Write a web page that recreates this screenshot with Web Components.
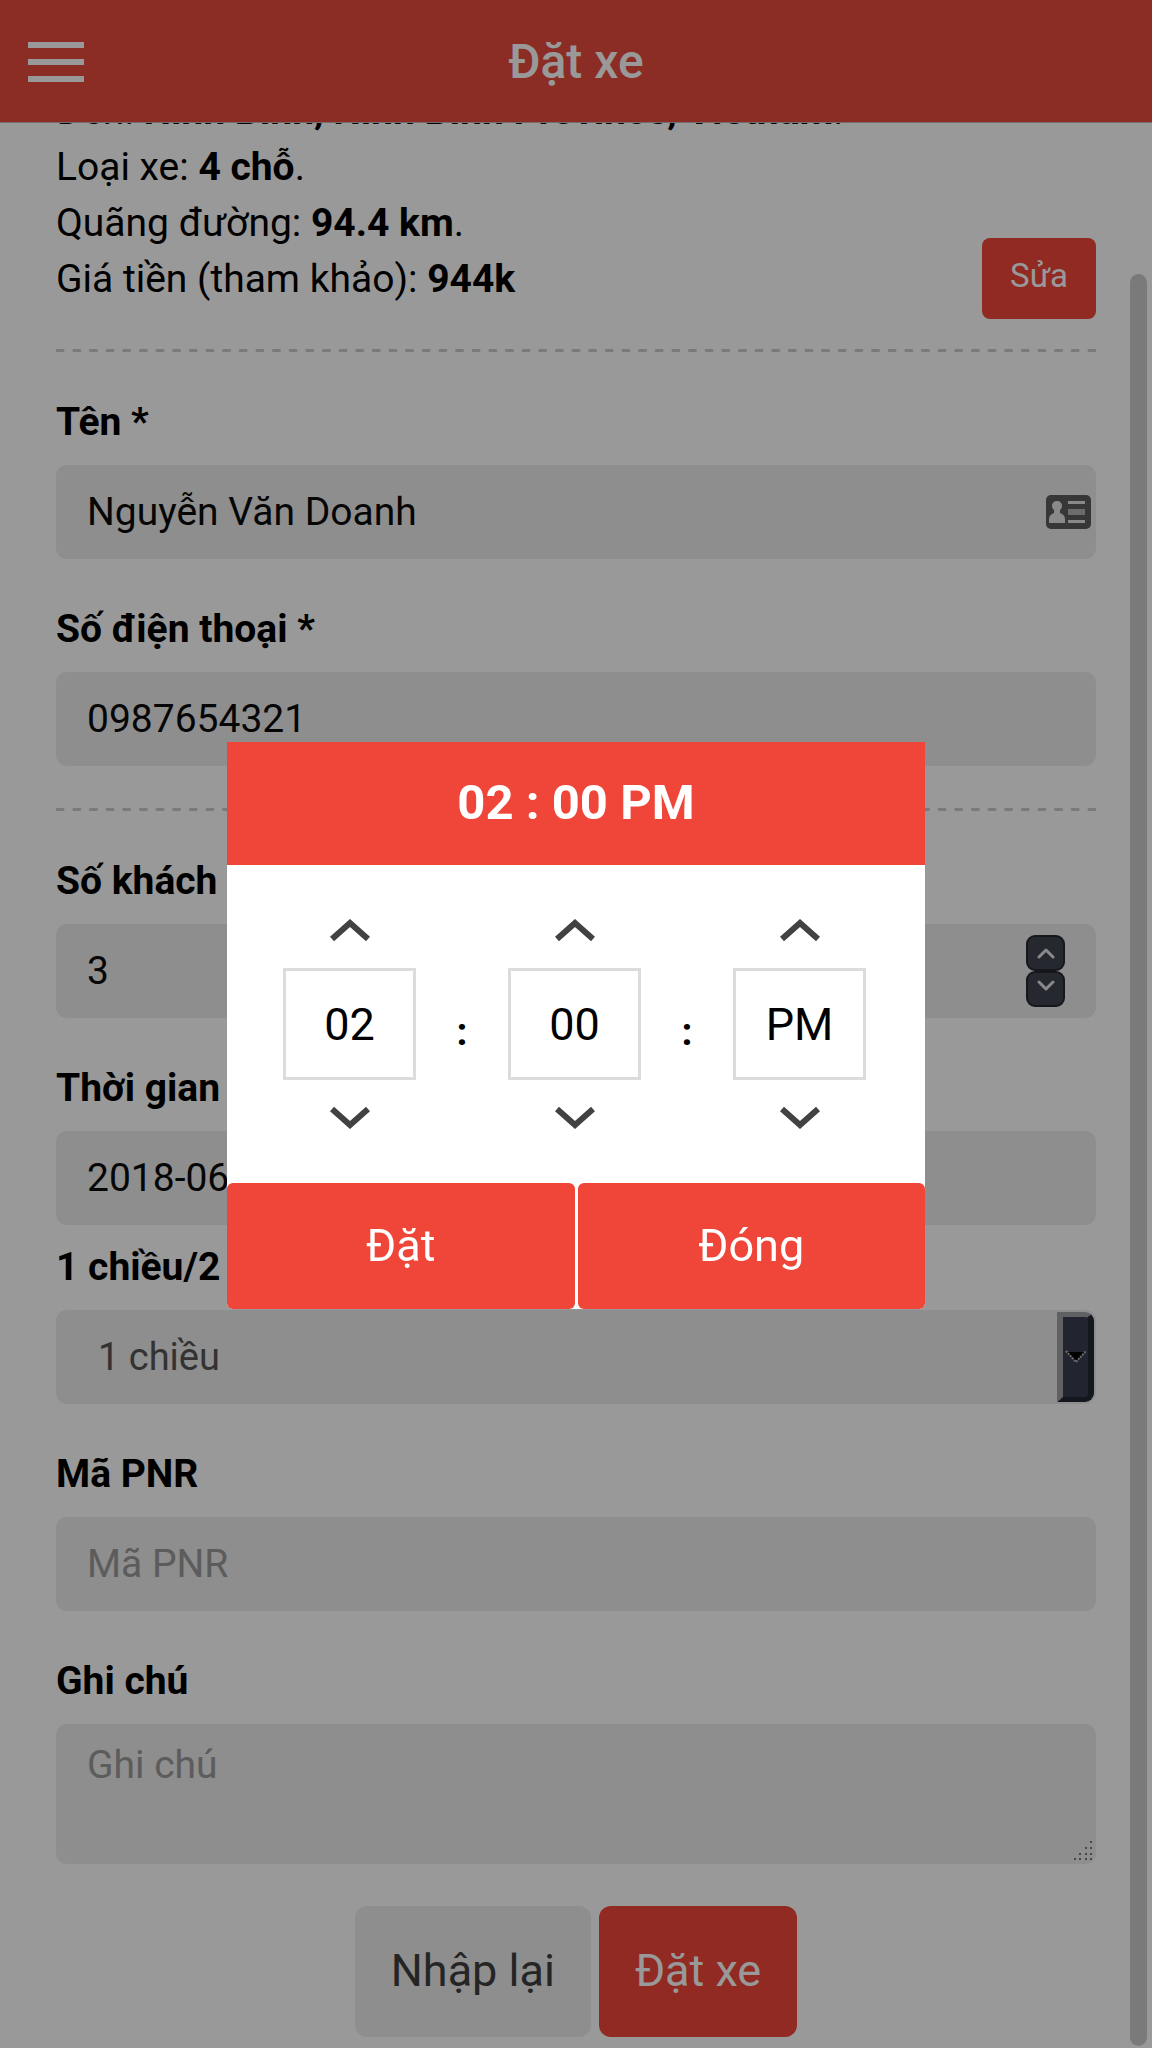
<!DOCTYPE html>
<html lang="vi">
<head>
<meta charset="utf-8">
<meta name="viewport" content="width=device-width, initial-scale=1">
<title>Đặt xe</title>
<style>
  :root {
    --brand: #f04639;
    --bar: #e84a3e;
    --field: #ededed;
    --line: #cccccc;
    --text-md: 39px;
    --text-lg: 45px;
    --gap: 42px;
    --side: 56px;
  }
  body {
    margin: 0;
    background: #fff;
    color: #000;
    font-family: Roboto, "Noto Sans", sans-serif;
    font-size: var(--text-md);
    line-height: 56px;
    overflow: hidden;
  }
</style>
</head>
<body>
<booking-app></booking-app>
<script>
const define = (name, html, setup) => {
  customElements.define(name, class extends HTMLElement {
    connectedCallback() {
      if (this.shadowRoot) return;
      const tpl = document.createElement('template');
      tpl.innerHTML = typeof html === 'function' ? html(this) : html;
      this.attachShadow({ mode: 'open' }).appendChild(tpl.content.cloneNode(true));
      if (setup) setup(this);
    }
  });
};

/* Top bar with menu button and page title */
define('app-bar', `
  <style>
    :host { position: fixed; inset: 0 0 auto 0; z-index: 1; display: grid;
      grid-template-columns: 84px 1fr 84px; align-items: center; box-sizing: border-box;
      height: 123px; padding-top: 2px; background: var(--bar); border-bottom: 1px solid #c4b4b2; }
    button { display: flex; border: 0; padding: 0 0 0 28px; background: none; color: #fff; }
    h1 { margin: 0; font-size: 48px; font-weight: 500; text-align: center; color: #fff; }
    svg { display: block; }
  </style>
  <button type="button" aria-label="Menu">
    <svg width="56" height="40" viewBox="0 0 56 40" fill="currentColor">
      <rect width="56" height="6"/><rect y="17" width="56" height="6"/><rect y="34" width="56" height="6"/>
    </svg>
  </button>
  <h1><slot></slot></h1>`);

/* Dashed rule that always starts and ends with a full dash */
define('dashed-rule', `
  <style>
    :host { display: block; height: 3px; }
    svg { display: block; width: 100%; height: 3px; }
  </style>
  <svg><line x1="0" y1="1.5" x2="100%" y2="1.5" pathLength="125" stroke="#ccc" stroke-width="3" stroke-dasharray="1 1"/></svg>`);

/* Trip summary */
define('trip-summary', `
  <style>
    :host { display: flex; justify-content: space-between; align-items: flex-end; white-space: nowrap; }
    p { margin: 0; }
    .edit { margin-bottom: -12px; flex: none; }
  </style>
  <div><slot></slot></div>
  <div class="edit"><slot name="action"></slot></div>`);

/* Push button; kinds: small, plain, brand, wide */
define('app-button', el => `
  <style>
    :host { display: block; }
    button { font: inherit; border: 0; margin: 0; width: 100%; display: block;
      border-radius: 12px; background: var(--brand); color: #fff;
      font-size: var(--text-lg); line-height: 56px; padding: 37px 36px 38px; }
    :host([kind=small]) button { font-size: 33px; padding: 10px 28px 15px; border-radius: 8px; }
    :host([kind=plain]) button { background: var(--field); color: #3e3e3e; }
    :host([kind=wide]) button { border-radius: 6px; padding: 35px 0; }
  </style>
  <button type="button"><slot></slot></button>`);

/* Labelled form field; kinds: text, number, select, textarea */
const controls = {
  text: el => `<input id="c" type="text" value="${el.getAttribute('value') || ''}" placeholder="${el.getAttribute('placeholder') || ''}">`,
  number: el => `<input id="c" type="number" value="${el.getAttribute('value')}">
    <span class="end steps">
      <button type="button" aria-label="Tăng"><svg width="18" height="12" viewBox="0 0 18 12"><path d="M2 10 9 3l7 7"/></svg></button>
      <button type="button" aria-label="Giảm"><svg width="18" height="12" viewBox="0 0 18 12"><path d="M2 2l7 7 7-7"/></svg></button>
    </span>`,
  select: el => `<select id="c"><option>${el.getAttribute('value')}</option></select>
    <span class="end drop"><svg width="22" height="14" viewBox="0 0 22 14"><path d="M2 2h18l-9 10z" fill="#000"/><path d="M1 1l10 11L21 1" fill="none" stroke="#b4b4b4" stroke-width="2" stroke-dasharray="2 1"/></svg></span>`,
  textarea: el => `<textarea id="c" placeholder="${el.getAttribute('placeholder')}"></textarea>
    <svg class="grip" width="20" height="20" viewBox="0 0 20 20" fill="#777">
      <path d="M17 0h2v2h-2zM17 6h2v2h-2zM12 6h2v2h-2zM17 12h2v2h-2zM12 12h2v2h-2zM6 12h2v2h-2zM17 17h2v2h-2zM12 17h2v2h-2zM6 17h2v2h-2zM1 17h2v2h-2z"/></svg>`
};
define('form-field', el => `
  <style>
    :host { display: flex; flex-direction: column; gap: 15px; }
    label { font-weight: 700; }
    .box { position: relative; display: flex; }
    input, select, textarea { font: inherit; color: #0a0a0a; box-sizing: border-box; width: 100%;
      height: 94px; margin: 0; border: 0; border-radius: 11px; background: var(--field);
      padding: 0 31px; outline: 0; appearance: none; }
    input[type=number] { appearance: textfield; }
    input::-webkit-inner-spin-button { appearance: none; }
    select { font-size: 38px; color: #555; padding: 0 42px; }
    textarea { height: 140px; padding: 13px 31px; resize: none; display: block; }
    ::placeholder { color: #999; opacity: 1; }
    .end { position: absolute; display: flex; }
    .steps { flex-direction: column; right: 31px; top: 11px; }
    .steps button { width: 39px; height: 36px; box-sizing: border-box; margin: 0; padding: 0;
      border: 2px solid #25272f; border-radius: 9px; background: #3e434f;
      display: flex; justify-content: center; align-items: center; }
    .steps button:last-child { align-items: flex-start; padding-top: 7px; }
    .steps path { fill: none; stroke: #e2e4ea; stroke-width: 3; stroke-linecap: round; stroke-linejoin: round; }
    .drop { right: 2px; top: 2px; bottom: 2px; width: 37px; box-sizing: border-box; pointer-events: none;
      border: 6px solid; border-width: 5px 6px 5px 6px; border-color: #a0a2a6 #242732 #242732 #a0a2a6;
      border-radius: 0 9px 9px 0; background: #393f4f; align-items: center; justify-content: center; }
    .drop svg { flex: none; }
    .card { right: 5px; top: 30px; }
    .grip { position: absolute; right: 3px; bottom: 3px; }
  </style>
  <label for="c">${el.getAttribute('label')}</label>
  <div class="box">${controls[el.getAttribute('kind') || 'text'](el)}${el.hasAttribute('contact') ? `
    <svg class="end card" width="45" height="34" viewBox="0 0 45 34">
      <rect width="45" height="34" rx="5" fill="#5c5c5c"/>
      <path fill="#e4e4e4" d="M11 6c3 0 5 2 5 5 0 2-1 3-2 4v3c3 1 5 3 5 6v4H3v-4c0-3 2-5 5-6v-3c-1-1-2-2-2-4 0-3 2-5 5-5z"/>
      <path fill="#e4e4e4" d="M22 6h17v3H22zM22 25h17v3H22z"/><path fill="#b4b4b4" d="M22 14h17v6H22z"/>
    </svg>` : ''}</div>`);

/* Scroll indicator at the right edge */
define('scroll-thumb', `
  <style>
    :host { position: fixed; right: 5px; top: 274px; bottom: 2px; width: 17px; border-radius: 9px; background: var(--line); }
  </style>`);

/* One column of the time picker */
define('time-wheel', el => `
  <style>
    :host { display: flex; flex-direction: column; gap: 27px; flex: none; width: 133px; }
    button { border: 0; padding: 0; margin: 0; background: none; display: flex; justify-content: center; }
    path { fill: none; stroke: #424242; stroke-width: 6; }
    input { font: inherit; font-size: var(--text-lg); color: #000; text-align: center; box-sizing: border-box;
      width: 100%; height: 112px; margin: 0; padding: 0; border: 3px solid #dcdcdc; background: #fff; border-radius: 0; }
  </style>
  <button type="button" aria-label="Tăng ${el.getAttribute('label')}"><svg width="40" height="22" viewBox="0 0 40 22"><path d="M2 20 20 4l18 16"/></svg></button>
  <input type="text" aria-label="${el.getAttribute('label')}" value="${el.getAttribute('value')}">
  <button type="button" aria-label="Giảm ${el.getAttribute('label')}"><svg width="40" height="22" viewBox="0 0 40 22"><path d="M2 2l18 16L38 2"/></svg></button>`);

/* Modal time picker over a dimmed page */
define('time-picker', `
  <style>
    :host { position: fixed; inset: 0; z-index: 2; display: flex; align-items: center; justify-content: center;
      padding-top: 3px; background: rgba(0, 0, 0, .4); box-sizing: border-box; }
    section { width: 698px; max-width: 100%; background: #fff; border-radius: 0 0 6px 6px; }
    h2 { margin: 0; padding: 33px 0 34px; font-size: 49px; line-height: 56px; font-weight: 700;
      text-align: center; color: #fff; background: var(--brand); }
    .wheels { display: flex; align-items: center; justify-content: space-between; padding: 54px 59px 54px 56px; }
    .wheels span { font-weight: 700; padding-top: 16px; }
    .actions { display: grid; grid-template-columns: 1fr 1fr; gap: 3px; }
  </style>
  <section role="dialog" aria-label="Chọn giờ">
    <h2>02 : 00 PM</h2>
    <div class="wheels">
      <time-wheel label="giờ" value="02"></time-wheel><span>:</span>
      <time-wheel label="phút" value="00"></time-wheel><span>:</span>
      <time-wheel label="buổi" value="PM"></time-wheel>
    </div>
    <div class="actions">
      <app-button kind="wide">Đặt</app-button>
      <app-button kind="wide">Đóng</app-button>
    </div>
  </section>`);

define('booking-app', `
  <style>
    :host { display: block; }
    main { display: flex; flex-direction: column; gap: var(--gap); padding: 83px var(--side) 0; }
    p { margin: 0; }
    .pair { display: flex; flex-direction: column; gap: 14px; }
    .buttons { display: flex; justify-content: center; gap: 8px; }
  </style>
  <app-bar>Đặt xe</app-bar>
  <main>
    <trip-summary>
      <p>Đến: <b>Ninh Bình, Ninh Bình Province, Vietnam</b>.</p>
      <p>Loại xe: <b>4 chỗ</b>.</p>
      <p>Quãng đường: <b>94.4 km</b>.</p>
      <p>Giá tiền (tham khảo): <b>944k</b></p>
      <app-button slot="action" kind="small">Sửa</app-button>
    </trip-summary>
    <dashed-rule></dashed-rule>
    <form-field label="Tên *" value="Nguyễn Văn Doanh" contact></form-field>
    <form-field label="Số điện thoại *" value="0987654321"></form-field>
    <dashed-rule></dashed-rule>
    <form-field label="Số khách" kind="number" value="3"></form-field>
    <div class="pair">
      <form-field label="Thời gian" value="2018-06"></form-field>
      <form-field label="1 chiều/2" kind="select" value="1 chiều"></form-field>
    </div>
    <form-field label="Mã PNR" placeholder="Mã PNR"></form-field>
    <form-field label="Ghi chú" kind="textarea" placeholder="Ghi chú"></form-field>
    <div class="buttons">
      <app-button kind="plain">Nhập lại</app-button>
      <app-button>Đặt xe</app-button>
    </div>
  </main>
  <scroll-thumb></scroll-thumb>
  <time-picker></time-picker>`);
</script>
</body>
</html>
